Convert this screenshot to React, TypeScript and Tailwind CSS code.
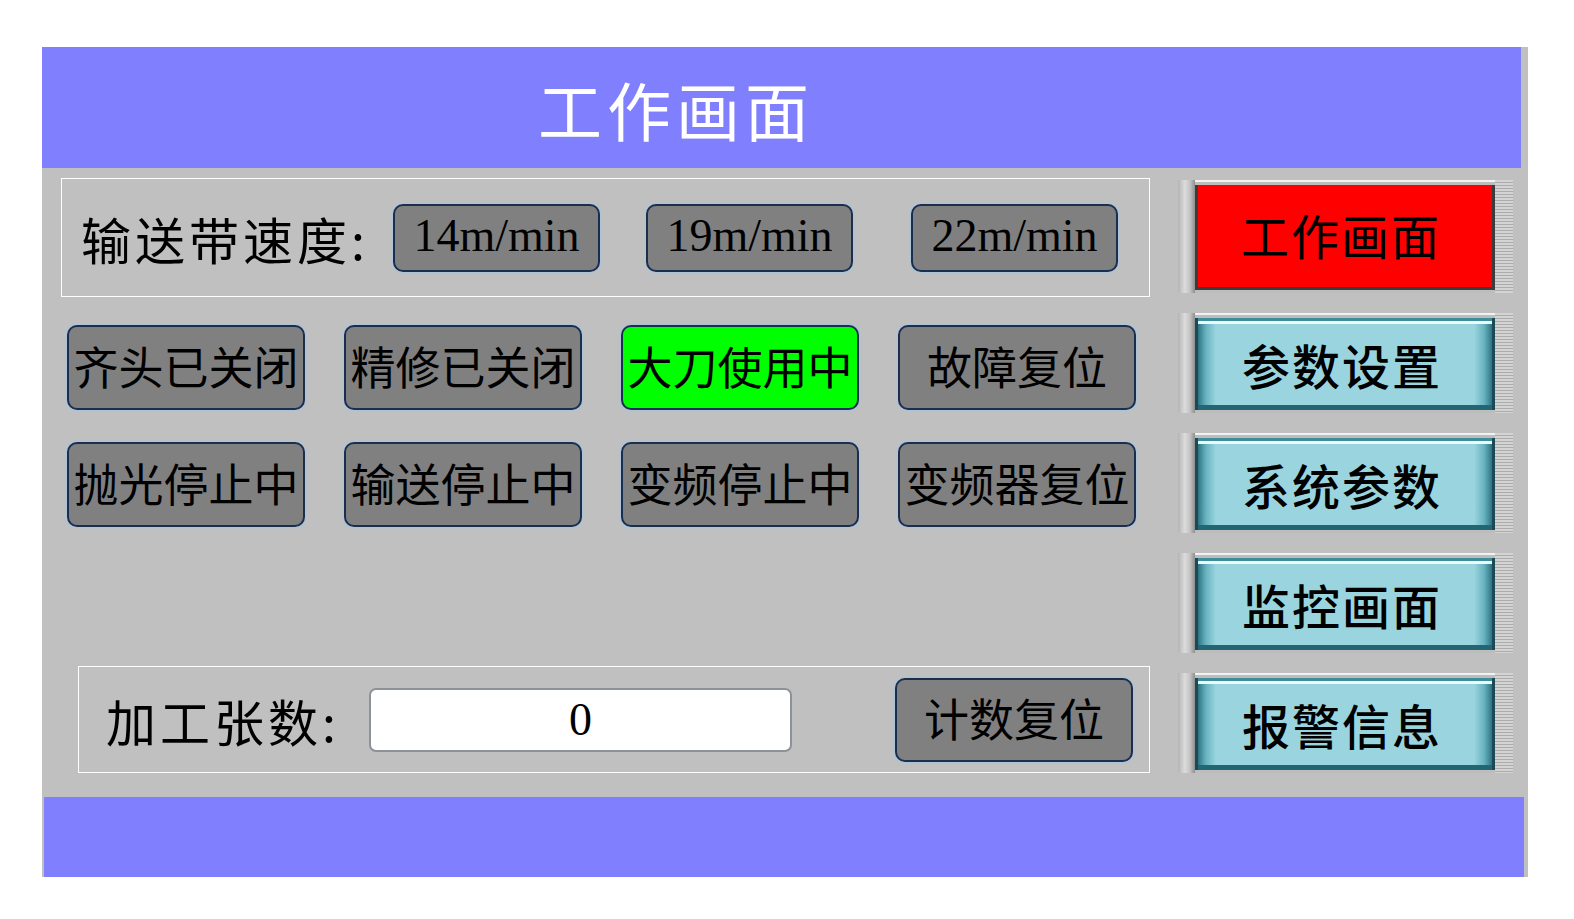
import React from 'react';

const speedOptions = ['14m/min', '19m/min', '22m/min'];

const statusButtons = [
    { label: '齐头已关闭', active: false },
    { label: '精修已关闭', active: false },
    { label: '大刀使用中', active: true },
    { label: '故障复位', active: false },
    { label: '抛光停止中', active: false },
    { label: '输送停止中', active: false },
    { label: '变频停止中', active: false },
    { label: '变频器复位', active: false },
];

const navItems = ['参数设置', '系统参数', '监控画面', '报警信息'];

const GrayButton: React.FC<{ label: string; active?: boolean; className?: string }> = ({ label, active = false, className = '' }) => (
    <button
        className={`flex items-center justify-center rounded-[10px] border-2 border-[#1c2e4e] shadow-[0_0_2px_1px_#a9c4dc] whitespace-nowrap leading-none text-black ${active ? 'bg-[#00ff00]' : 'bg-[#808080]'} ${className}`}
    >
        {label}
    </button>
);

const NavFrame: React.FC<{ children: React.ReactNode; tall?: boolean }> = ({ children, tall = false }) => (
    <div className={`flex w-[335px] ${tall ? 'h-[113px]' : 'h-[100px]'}`}>
        {/* left bevel strip */}
        <div className="w-[17px] h-full bg-[linear-gradient(to_right,#b4b4b4,#dcdcdc_40%,#c4c4c4_70%,#8e8e8e)]" />
        <div className="w-[300px] h-full border-t-2 border-[#f2f2f2] pt-[3px] pb-[3px] bg-[#bdbdbd]">
            {children}
        </div>
        {/* right ridged strip */}
        <div className="w-[18px] h-full bg-[repeating-linear-gradient(to_bottom,#d4d4d4_0px,#d4d4d4_2px,#acacac_2px,#acacac_3px)]" />
    </div>
);

export default function App() {
    return (
        <div className="min-h-screen bg-white pt-[47px] pl-[42px] font-['Noto_Sans_CJK_SC','Noto_Sans',sans-serif]">
            <div className="w-[1486px] h-[830px] bg-[#c0c0c0] flex flex-col">
                {/* Header */}
                <header className="h-[121px] w-[1479px] bg-[#8080ff] flex items-center pl-[496px]">
                    <h1 className="text-[64px] leading-none tracking-[5px] text-white font-normal">工作画面</h1>
                </header>

                {/* Body */}
                <div className="flex h-[629px]">
                    {/* Left column */}
                    <div className="w-[1108px] pl-[19px] pt-[10px] flex flex-col">
                        {/* Conveyor speed */}
                        <div className="w-[1089px] h-[119px] border border-white flex items-center pl-[19px]">
                            <span className="w-[312px] text-[50px] leading-none tracking-[4px] text-black whitespace-nowrap">输送带速度:</span>
                            {speedOptions.map((s, i) => (
                                <GrayButton
                                    key={s}
                                    label={s}
                                    className={`w-[207px] h-[68px] pb-[4px] text-[46px] font-['Liberation_Serif',serif] ${i === 1 ? 'ml-[46px]' : i === 2 ? 'ml-[58px]' : ''}`}
                                />
                            ))}
                        </div>

                        {/* Status grid */}
                        <div className="mt-[28px] pl-[6px] grid grid-cols-[repeat(4,238px)] gap-x-[39px] gap-y-[32px]">
                            {statusButtons.map((b) => (
                                <GrayButton key={b.label} label={b.label} active={b.active} className="h-[85px] pb-[4px] text-[45px]" />
                            ))}
                        </div>

                        {/* Piece count */}
                        <div className="mt-[139px] ml-[17px] w-[1072px] h-[107px] border border-white flex items-center pl-[27px]">
                            <span className="w-[263px] text-[50px] leading-none tracking-[4px] text-black whitespace-nowrap">加工张数:</span>
                            <div className="w-[423px] h-[64px] bg-white rounded-[7px] border-2 border-[#8c9298] flex items-center justify-center">
                                <span className="text-[46px] leading-none text-black font-['Liberation_Serif',serif]">0</span>
                            </div>
                            <GrayButton label="计数复位" className="ml-[103px] w-[238px] h-[84px] pb-[4px] text-[45px]" />
                        </div>
                    </div>

                    {/* Right nav column */}
                    <div className="ml-[28px] pt-[12px] flex flex-col gap-[20px]">
                        <NavFrame tall>
                            <div className="h-full bg-[#ff0000] border-[3px] border-t-0 border-[#3c3c3c] flex items-center justify-center pr-[8px] pb-[4px]">
                                <span className="text-[48px] leading-none tracking-[2px] text-black">工作画面</span>
                            </div>
                        </NavFrame>
                        {navItems.map((n) => (
                            <NavFrame key={n}>
                                <div className="h-full border-x-[3px] border-[#1b4a56] bg-[linear-gradient(to_right,#2d7482_0px,#68b3c0_8px,#9ad5df_18px,#9ad5df_calc(100%_-_18px),#68b3c0_calc(100%_-_8px),#2d7482_100%)] shadow-[inset_0_3px_0_#3f8c9a,inset_0_6px_0_#e8fbff,inset_0_-5px_0_#236573] flex items-center justify-center pr-[6px]">
                                    <span className="text-[48px] leading-none tracking-[2px] text-black font-medium">{n}</span>
                                </div>
                            </NavFrame>
                        ))}
                    </div>
                </div>

                {/* Footer band */}
                <div className="h-[80px] w-[1480px] ml-[2px] bg-[#8080ff]" />
            </div>
        </div>
    );
}
